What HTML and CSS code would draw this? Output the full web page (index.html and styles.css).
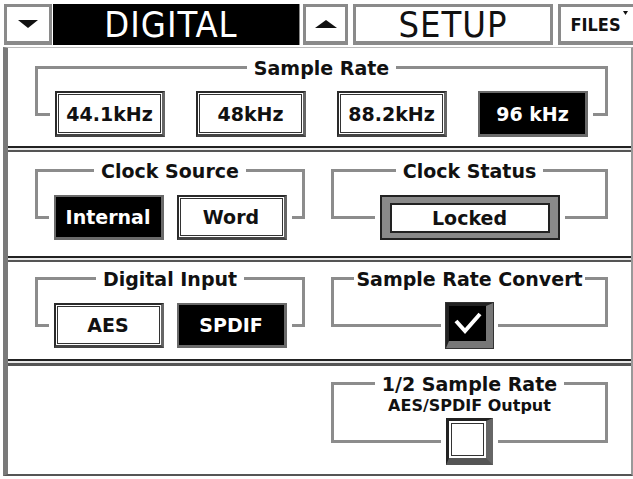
FILE: index.html
```html
<!DOCTYPE html>
<html>
<head>
<meta charset="utf-8">
<link rel="stylesheet" href="styles.css">
</head>
<body>
<div class="tabbar">
  <div class="tab arrow down"><svg width="20" height="8" viewBox="0 0 20 8"><polygon points="0,0 20,0 10,8"/></svg></div>
  <div class="tab ttl dark">DIGITAL</div>
  <div class="tab arrow up"><svg width="22" height="8" viewBox="0 0 22 8"><polygon points="0,8 22,8 11,0"/></svg></div>
  <div class="tab ttl light">SETUP</div>
  <div class="tab files"><span>FILES</span><svg class="mark" width="5" height="4" viewBox="0 0 5 4"><polygon points="0,0 5,0 2.5,4"/></svg></div>
</div>
<div class="panel">
  <section class="sec s1">
    <div class="group">
      <div class="bracket"></div>
      <div class="gtitle">Sample Rate</div>
      <div class="grow">
        <i class="tick"></i>
        <div class="btns rates">
          <div class="btn">44.1kHz</div>
          <div class="btn">48kHz</div>
          <div class="btn">88.2kHz</div>
          <div class="btn on">96 kHz</div>
        </div>
        <i class="tick"></i>
      </div>
    </div>
  </section>
  <div class="sep"></div>
  <section class="sec two s2">
    <div class="group">
      <div class="bracket"></div>
      <div class="gtitle">Clock Source</div>
      <div class="grow">
        <i class="tick"></i>
        <div class="btns pair">
          <div class="btn on">Internal</div>
          <div class="btn">Word</div>
        </div>
        <i class="tick"></i>
      </div>
    </div>
    <div class="group">
      <div class="bracket"></div>
      <div class="gtitle">Clock Status</div>
      <div class="grow">
        <i class="tick"></i>
        <div class="status"><div class="status-in">Locked</div></div>
        <i class="tick"></i>
      </div>
    </div>
  </section>
  <div class="sep"></div>
  <section class="sec two s3">
    <div class="group">
      <div class="bracket"></div>
      <div class="gtitle">Digital Input</div>
      <div class="grow">
        <i class="tick"></i>
        <div class="btns pair">
          <div class="btn">AES</div>
          <div class="btn on">SPDIF</div>
        </div>
        <i class="tick"></i>
      </div>
    </div>
    <div class="group">
      <div class="bracket"></div>
      <div class="gtitle tight">Sample Rate Convert</div>
      <div class="grow">
        <i class="tick"></i>
        <div class="chk checked"><svg width="34" height="30" viewBox="0 0 34 30"><polyline points="5,12 14,22 29,5" fill="none" stroke="#fff" stroke-width="4"/></svg></div>
        <i class="tick"></i>
      </div>
    </div>
  </section>
  <div class="sep thick"></div>
  <section class="sec two s4">
    <div class="empty"></div>
    <div class="group">
      <div class="bracket"></div>
      <div class="gtitle">1/2 Sample Rate<span class="sub">AES/SPDIF Output</span></div>
      <div class="grow">
        <i class="tick"></i>
        <div class="chk"></div>
        <i class="tick"></i>
      </div>
    </div>
  </section>
</div>
</body>
</html>
```

FILE: styles.css
```css
* { box-sizing: border-box; margin: 0; padding: 0; }
html, body { width: 633px; height: 479px; overflow: hidden; background: #fff; }
body { font-family: "DejaVu Sans", "Liberation Sans", sans-serif; color: #111; }

.tabbar { display: flex; height: 45px; padding: 4px 0 0 4px; }
.tab {
  height: 41px; flex: none;
  display: flex; align-items: center; justify-content: center;
  background: #fff;
  border: 3px solid #8a8a8a; border-bottom-width: 4px;
}
.tab svg { fill: #111; }
.down { width: 48px; }
.dark { width: 247px; margin-left: 1px; padding-right: 10px; background: #000; color: #fff; border: none; border-right: 1px solid #888; }
.up { width: 45px; margin-left: 3px; }
.light { width: 200px; margin-left: 5px; }
.files { width: 75px; margin-left: 5px; border-right: none; align-items: center; padding-left: 4px; }
.ttl { font-size: 36px; font-stretch: condensed; letter-spacing: 1px; font-weight: normal; }
.files span { font-size: 18px; font-weight: bold; font-stretch: condensed; }
.files .mark { align-self: flex-start; margin: 4px 0 0 2px; }

.panel {
  margin: 2px 0 0 3px; height: 429px;
  border-top: 1px solid #bbb; border-left: 5px solid #7a7a7a;
  border-right: 2px solid #999; border-bottom: 2px solid #555;
  display: flex; flex-direction: column;
}
.sec { display: grid; padding: 0 23px 0 27px; flex: none; }
.two { grid-template-columns: 270px 1fr; column-gap: 26px; }
.s1 { height: 98px; --line: 18px; --bh: 49px; --row: 43px; --bth: 46px; }
.s2 { height: 104px; --line: 17px; --bh: 50px; --row: 43px; --bth: 45px; }
.s3 { height: 97px; --line: 15px; --bh: 50px; --row: 41px; --bth: 45px; }
.s4 { height: 108px; --line: 16px; --bh: 61px; --row: 52px; --bth: 47px; }

.sep { height: 6px; flex: none; border-top: 2px solid #222; border-bottom: 2px solid #555; background: #e8e8e8; }
.sep.thick { height: 7px; border-bottom-width: 3px; }

.group { display: grid; }
.group > * { grid-area: 1 / 1; align-self: start; }
.bracket {
  margin-top: var(--line); height: var(--bh);
  border: 3px solid #8c8c8c; border-bottom: none;
}
.gtitle {
  justify-self: center; margin-top: calc(var(--line) - 8px);
  background: #fff; padding: 0 7px;
  font-size: 19px; font-weight: bold; line-height: 20px; text-align: center;
}
.gtitle.tight { padding: 0 2px; }
.sub { display: block; font-size: 16px; line-height: 20px; margin-top: 2px; }

.grow { display: flex; align-items: center; margin-top: var(--row); }
.tick { flex: 1; height: 3px; background: #8c8c8c; }
.tick:first-child { margin-right: 5px; }
.tick:last-child { margin-left: 5px; }

.btns { display: flex; }
.rates { gap: 31px; }
.pair { gap: 13px; }
.btn {
  width: 110px; height: var(--bth);
  display: flex; align-items: center; justify-content: center;
  font-size: 19px; font-weight: bold;
  background: #fff;
  border: 2px solid #2a2a2a; border-right: 3px solid #666; border-bottom: 3px solid #444;
  box-shadow: inset 0 0 0 1px #fff, inset 0 0 0 2px #333;
}
.btn.on { background: #000; color: #fff; border: 2px solid #6a6a6a; border-right-width: 3px; border-bottom-width: 3px; box-shadow: none; }

.status {
  width: 180px; height: var(--bth);
  border: 2px solid #222; padding: 6px 8px 5px;
  background: #8a8a8a;
}
.status-in {
  height: 100%; border: 2px solid #222; background: #fff;
  display: flex; align-items: center; justify-content: center;
  font-size: 19px; font-weight: bold;
}

.chk {
  width: 47px; height: var(--bth); flex: none;
  background: #fff;
  border-left: 3px solid #222; border-top: 3px solid #222;
  border-right: 7px solid #666; border-bottom: 7px solid #555;
  box-shadow: inset 0 0 0 2px #fff, inset 0 0 0 3px #333;
  display: flex; align-items: center; justify-content: center;
}
.chk.checked { background: #000; border-right-color: #777; border-bottom-color: #777; box-shadow: 0 0 0 1px #333; }
```
